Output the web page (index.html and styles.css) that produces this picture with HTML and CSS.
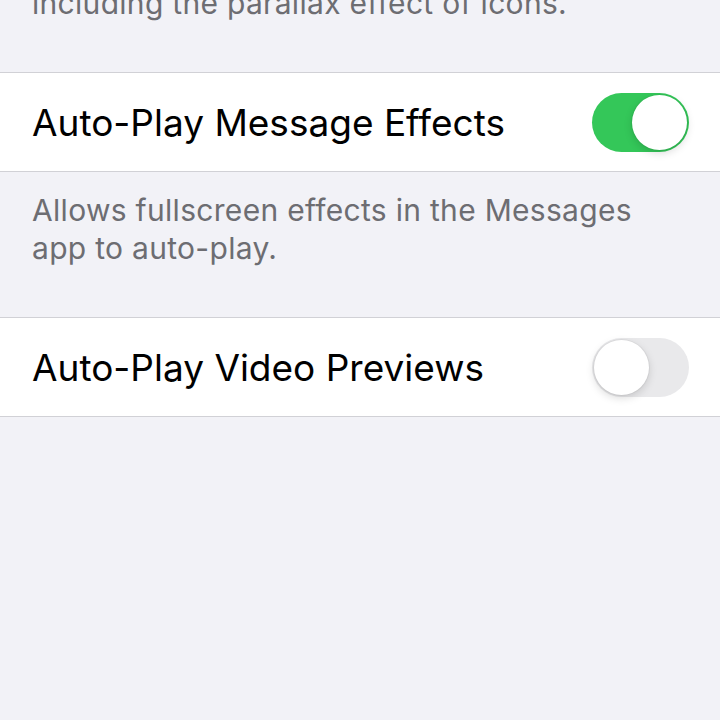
FILE: index.html
```html
<!DOCTYPE html>
<html lang="en">
<head>
    <meta charset="UTF-8">
    <meta name="viewport" content="width=device-width, initial-scale=1.0">
    <title>Motion</title>
    <link rel="stylesheet" href="styles.css">
</head>
<body>
    <div class="settings">
        <div class="footer footer-cut">including the parallax effect of icons.</div>
        <div class="group">
            <div class="row">
                <span class="label">Auto-Play Message Effects</span>
                <span class="switch on"><span class="knob"></span></span>
            </div>
        </div>
        <div class="footer">Allows fullscreen effects in the Messages app to auto-play.</div>
        <div class="group">
            <div class="row">
                <span class="label">Auto-Play Video Previews</span>
                <span class="switch"><span class="knob"></span></span>
            </div>
        </div>
    </div>
</body>
</html>
```

FILE: styles.css
```css
body {
    margin: 0;
    background-color: #f2f2f7;
    font-family: 'Inter', 'Noto Sans', sans-serif;
    height: 720px;
    overflow: hidden;
}
.settings {
    display: flex;
    flex-direction: column;
}
.footer {
    padding: 19px 70px 50px 32px;
    font-size: 30px;
    line-height: 38px;
    letter-spacing: 0.3px;
    color: #6d6d72;
}
.footer-cut {
    padding-top: 0;
    margin-top: -16px;
}
.group {
    background-color: #fff;
    border-top: 1px solid #d1d1d6;
    border-bottom: 1px solid #d1d1d6;
}
.row {
    display: flex;
    align-items: center;
    justify-content: space-between;
    height: 98px;
    padding: 0 31px 0 32px;
}
.label {
    font-size: 37px;
    color: #000;
}
.switch {
    display: flex;
    align-items: center;
    width: 97px;
    height: 59px;
    border-radius: 30px;
    background-color: #e9e9eb;
    padding: 2px;
    box-sizing: border-box;
}
.switch.on {
    background-color: #34c759;
    justify-content: flex-end;
}
.knob {
    width: 55px;
    height: 55px;
    border-radius: 50%;
    background-color: #fff;
    box-shadow: 0 3px 8px rgba(0, 0, 0, 0.15), 0 0 0 1px rgba(0, 0, 0, 0.04);
}
```
